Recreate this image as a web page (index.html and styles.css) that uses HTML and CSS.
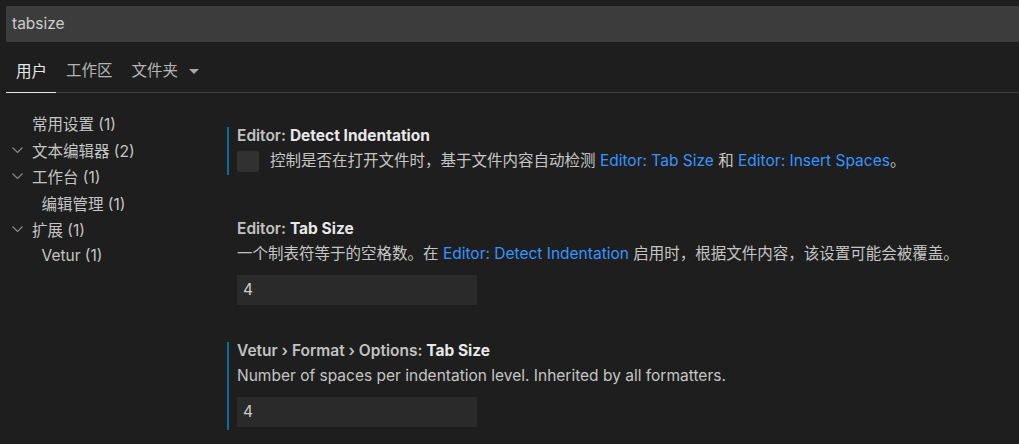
FILE: index.html
```html
<!DOCTYPE html>
<html lang="zh-CN">
<head>
<meta charset="utf-8">
<title>Settings</title>
<link rel="stylesheet" href="styles.css">
</head>
<body>
<div class="header">
  <div class="search">tabsize</div>
  <div class="tabs">
    <div class="tab active">用户</div>
    <div class="tab">工作区</div>
    <div class="tab">文件夹<span class="caret"></span></div>
  </div>
</div>
<div class="main">
  <div class="tree">
    <div class="row"><span class="twistie"></span><span>常用设置 (1)</span></div>
    <div class="row"><span class="twistie"><svg width="11" height="6" viewBox="0 0 11 6"><polyline points="0.5,0.5 5.5,5.5 10.5,0.5" fill="none" stroke="#8c8c8c" stroke-width="1.1"/></svg></span><span>文本编辑器 (2)</span></div>
    <div class="row"><span class="twistie"><svg width="11" height="6" viewBox="0 0 11 6"><polyline points="0.5,0.5 5.5,5.5 10.5,0.5" fill="none" stroke="#8c8c8c" stroke-width="1.1"/></svg></span><span>工作台 (1)</span></div>
    <div class="row child"><span class="twistie"></span><span>编辑管理 (1)</span></div>
    <div class="row"><span class="twistie"><svg width="11" height="6" viewBox="0 0 11 6"><polyline points="0.5,0.5 5.5,5.5 10.5,0.5" fill="none" stroke="#8c8c8c" stroke-width="1.1"/></svg></span><span>扩展 (1)</span></div>
    <div class="row child"><span class="twistie"></span><span>Vetur (1)</span></div>
  </div>
  <div class="settings">
    <div class="setting focused bool">
      <div class="title"><span class="cat">Editor: </span><span class="label">Detect Indentation</span></div>
      <div class="bool-row">
        <span class="checkbox"></span>
        <span class="desc">控制是否在打开文件时，基于文件内容自动检测 <a class="link">Editor: Tab Size</a> 和 <a class="link">Editor: Insert Spaces</a>。</span>
      </div>
    </div>
    <div class="setting">
      <div class="title"><span class="cat">Editor: </span><span class="label">Tab Size</span></div>
      <div class="desc">一个制表符等于的空格数。在 <a class="link">Editor: Detect Indentation</a> 启用时，根据文件内容，该设置可能会被覆盖。</div>
      <div class="input">4</div>
    </div>
    <div class="setting focused">
      <div class="title"><span class="cat">Vetur › Format › Options: </span><span class="label">Tab Size</span></div>
      <div class="desc">Number of spaces per indentation level. Inherited by all formatters.</div>
      <div class="input">4</div>
    </div>
  </div>
</div>
</body>
</html>
```
FILE: styles.css
```css
html, body {
  margin: 0;
  padding: 0;
  background: #1e1e1e;
  height: 100%;
  overflow: hidden;
}
body {
  font-family: Inter, "Noto Sans CJK SC", sans-serif;
  font-size: 15.5px;
  color: #c5c5c5;
}
.header {
  padding: 6px 0 0 6px;
}
.search {
  height: 36px;
  line-height: 36px;
  background: #3c3c3c;
  color: #cccccc;
  padding-left: 6px;
}
.tabs {
  display: flex;
  margin-top: 12px;
  border-bottom: 1px solid #3f3f3f;
}
.tab {
  display: flex;
  align-items: center;
  height: 38px;
  padding: 0 9px 4px 10px;
  line-height: 20px;
  color: #b4b4b4;
  box-sizing: border-box;
}
.tab.active {
  color: #e7e7e7;
  margin-bottom: -1px;
  height: 39px;
  border-bottom: 1px solid #e7e7e7;
  padding-bottom: 3px;
}
.caret {
  display: inline-block;
  width: 0;
  height: 0;
  border-left: 5px solid transparent;
  border-right: 5px solid transparent;
  border-top: 5px solid #a8a8a8;
  margin-left: 11px;
  margin-top: 1px;
}
.main {
  display: flex;
}
.tree {
  width: 227px;
  flex: none;
  padding-top: 17px;
}
.row {
  display: flex;
  align-items: center;
  height: 26.5px;
  padding-left: 12px;
  color: #c5c5c5;
}
.row.child {
  padding-left: 21.5px;
}
.twistie {
  width: 11px;
  height: 26.5px;
  margin-right: 9px;
  display: flex;
  align-items: center;
}
.twistie svg {
  display: block;
}
.settings {
  flex: 1;
  padding-top: 34px;
}
.setting {
  border-left: 2px solid transparent;
  padding-left: 8px;
  padding-bottom: 3px;
  margin-bottom: 34px;
}
.setting.bool {
  margin-bottom: 45px;
}
.setting.focused {
  border-left-color: #0e6c98;
}
.title {
  line-height: 18px;
  font-weight: 700;
  color: #e8e8e8;
}
.title .cat {
  font-weight: 600;
  color: #c2c2c2;
}
.desc {
  line-height: 19px;
  margin-top: 6px;
  color: #c5c5c5;
  white-space: nowrap;
}
.bool-row {
  display: flex;
  align-items: flex-start;
  margin-top: 6px;
}
.bool-row .desc {
  margin-top: 0;
}
.checkbox {
  width: 22px;
  height: 21px;
  border-radius: 3px;
  background: #313131;
  margin-right: 11px;
  flex: none;
}
.link {
  color: #3794ff;
  text-decoration: none;
}
.input {
  width: 240px;
  height: 30px;
  line-height: 30px;
  box-sizing: border-box;
  padding-left: 6px;
  margin-top: 12px;
  background: #2a2a2a;
  color: #cccccc;
}
```
